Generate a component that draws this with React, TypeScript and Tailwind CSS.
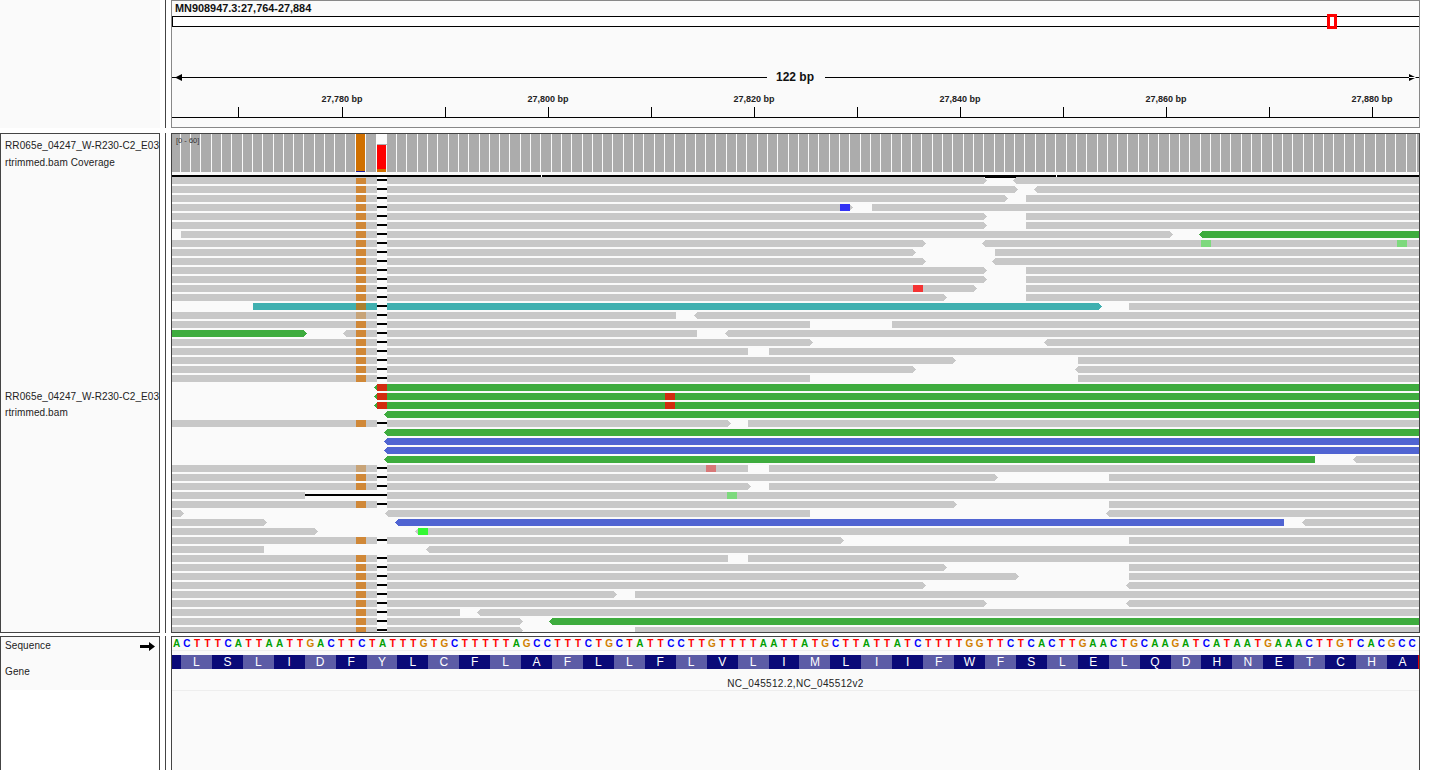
type Seg = { s: number; e: number; dir?: 'l' | 'r'; fill?: string };
type Mark = { s: number; fill: string };

const GRAY = '#c8c8c8';
const GREEN = '#3eac3e';
const BLUE = '#5064d2';
const TEAL = '#40b0b0';
const END = 1419;

const gr = (s: number, e: number, dir?: 'l' | 'r', fill?: string): Seg => ({ s, e, dir, fill });

const ROWS: Seg[][] = [
  [gr(172, 987, 'r'), gr(1013, END, 'l')],
  [gr(172, 1018, 'r'), gr(1034, END, 'l')],
  [gr(172, 1008, 'r'), gr(1026, END)],
  [gr(172, 853, 'r'), gr(872, END)],
  [gr(172, 987, 'r'), gr(1026, END)],
  [gr(172, 987, 'r'), gr(1026, END)],
  [gr(181, 1173, 'r'), gr(1199, END, 'l', GREEN)],
  [gr(172, 926, 'r'), gr(982, END, 'l')],
  [gr(172, 916, 'r'), gr(995, END)],
  [gr(172, 926, 'r'), gr(992, END, 'l')],
  [gr(172, 987, 'r'), gr(1026, END)],
  [gr(172, 987, 'r'), gr(1026, END)],
  [gr(172, 977, 'r'), gr(1026, END)],
  [gr(172, 947, 'r'), gr(1026, END)],
  [gr(253, 1102, 'r', TEAL), gr(1129, END)],
  [gr(172, 676), gr(694, END, 'l')],
  [gr(172, 810), gr(892, END)],
  [gr(172, 307, 'r', GREEN), gr(343, 697, 'l'), gr(725, END, 'l')],
  [gr(172, 813, 'r'), gr(1044, END, 'l')],
  [gr(172, 748), gr(769, END)],
  [gr(172, 956, 'r'), gr(1078, END)],
  [gr(172, 916, 'r'), gr(1075, END, 'l')],
  [gr(172, 810), gr(1078, END)],
  [gr(374, END, 'l', GREEN)],
  [gr(374, END, 'l', GREEN)],
  [gr(374, END, 'l', GREEN)],
  [gr(384, END, 'l', GREEN)],
  [gr(172, 731, 'r'), gr(748, END)],
  [gr(384, END, 'l', GREEN)],
  [gr(384, END, 'l', BLUE)],
  [gr(384, END, 'l', BLUE)],
  [gr(384, 1315, 'l', GREEN), gr(1353, END, 'l')],
  [gr(172, 748), gr(769, END)],
  [gr(172, 998, 'r'), gr(1109, END)],
  [gr(172, 751, 'r'), gr(769, END)],
  [gr(172, 305), gr(387, END)],
  [gr(172, 957, 'r'), gr(1109, END)],
  [gr(172, 184, 'r'), gr(385, 810, 'l'), gr(1106, END, 'l')],
  [gr(172, 267, 'r'), gr(395, 1284, 'l', BLUE), gr(1302, END, 'l')],
  [gr(172, 318, 'r'), gr(415, END, 'l')],
  [gr(172, 844, 'r'), gr(1129, END)],
  [gr(172, 264), gr(426, END, 'l')],
  [gr(172, 728), gr(748, END)],
  [gr(172, 947, 'r'), gr(1129, END)],
  [gr(172, 1019, 'r'), gr(1129, END)],
  [gr(172, 926, 'r'), gr(1126, END, 'l')],
  [gr(172, 617, 'r'), gr(635, END)],
  [gr(172, 987, 'r'), gr(1126, END, 'l')],
  [gr(172, 460), gr(477, END, 'l')],
  [gr(172, 523, 'r'), gr(549, END, 'l', GREEN)],
  [gr(172, 523, 'r'), gr(635, END)],
];

// rows without the C>A call and the deletion at 27,783
const NO_SITE = new Set([23, 24, 25, 26, 28, 29, 30, 31, 35, 37, 38, 39, 41]);

const MISMATCHES: Record<number, Mark[]> = {
  3: [{ s: 840, fill: '#3333f5' }],
  7: [
    { s: 1201, fill: '#7dd97d' },
    { s: 1397, fill: '#7dd97d' },
  ],
  12: [{ s: 913, fill: '#f43333' }],
  23: [{ s: 377, fill: '#d22c10' }],
  24: [
    { s: 377, fill: '#d22c10' },
    { s: 665, fill: '#d22c10' },
  ],
  25: [
    { s: 377, fill: '#d22c10' },
    { s: 665, fill: '#d22c10' },
  ],
  32: [{ s: 706, fill: '#d87878' }],
  35: [{ s: 727, fill: '#7dd97d' }],
  39: [{ s: 418, fill: '#33f833' }],
};

const SEQUENCE =
  'ACTTTCATTAATTGACTTCTATTTGTGCTTTTTAGCCTTTCTGCTATTCCTTGTTTTAATTATGCTTATTATCTTTTGGTTCTCACTTGAACTGCAAGATCATAATGAAACTTGTCACGCC';
const AMINO = 'LSLIDFYLCFLAFLLFLVLIMLIIFWFSLELQDHNETCHA';

const BASE_COLORS: Record<string, string> = {
  A: 'text-[#00a000]',
  C: 'text-[#0000ff]',
  G: 'text-[#d18000]',
  T: 'text-[#ff0000]',
};

function readPoints({ s, e, dir }: Seg, y: number) {
  const h = 7;
  const mid = y + h / 2;
  if (dir === 'r') return `${s},${y} ${e - 3},${y} ${e + 0.2},${mid} ${e - 3},${y + h} ${s},${y + h}`;
  if (dir === 'l') return `${s},${mid} ${s + 3},${y} ${e},${y} ${e},${y + h} ${s + 3},${y + h}`;
  return `${s},${y} ${e},${y} ${e},${y + h} ${s},${y + h}`;
}

function Coverage() {
  const lines = Array.from({ length: 121 }, (_, k) => Math.floor(180.3 + 10.3 * k)).filter((x) => x < END);
  return (
    <div className="relative h-[43px]">
      <svg width={1247} height={43} viewBox="172 134 1247 43" shapeRendering="crispEdges" className="block">
        <rect x={172} y={134} width={1247} height={38} fill="#acacac" />
        {lines.map((x) => (
          <rect key={x} x={x} y={134} width={1} height={38} fill="#fafafa" />
        ))}
        <rect x={356} y={134} width={9} height={38} fill="#d07000" />
        <rect x={356} y={171} width={9} height={1} fill="#1a1a9a" />
        <rect x={376} y={134} width={11} height={38} fill="#fafafa" />
        <rect x={377} y={144} width={10} height={1} fill="#acacac" />
        <rect x={377} y={145} width={9} height={24} fill="#ff0000" />
        <rect x={377} y={169} width={9} height={3} fill="#d07000" />
        <rect x={172} y={175} width={1247} height={2} fill="#000000" />
        <rect x={541} y={175} width={1} height={2} fill="#ffffff" />
        <rect x={1056} y={175} width={1} height={2} fill="#ffffff" />
      </svg>
      <span className="absolute left-[4px] top-[2px] text-[7.5px] leading-[10px] text-[#333]">[0 - 60]</span>
    </div>
  );
}

function Pileup() {
  return (
    <svg width={1247} height={455} viewBox="172 177 1247 455" shapeRendering="crispEdges" className="block">
      {ROWS.map((segs, i) => {
        const y = 177 + 9 * i + (i === 0 ? 1 : 0);
        const top = 177 + 9 * i;
        const hasSite = !NO_SITE.has(i);
        const tan = i === 15 || i === 32;
        return (
          <g key={i}>
            {segs.map((seg) => (
              <polygon key={seg.s} points={readPoints(seg, top)} fill={seg.fill ?? GRAY} />
            ))}
            {hasSite && (
              <>
                <rect x={377} y={top} width={10} height={7} fill="#fafafa" />
                <rect x={377} y={top + 2} width={10} height={2} fill="#000000" />
                <rect
                  x={356}
                  y={y}
                  width={10}
                  height={i === 0 ? 6 : 7}
                  fill={i === 14 ? '#ab8030' : tan ? '#c8a478' : '#d08838'}
                />
              </>
            )}
            {(MISMATCHES[i] ?? []).map((m) => (
              <rect key={m.s} x={m.s} y={top} width={10} height={7} fill={m.fill} />
            ))}
            {i === 35 && <rect x={305} y={top + 2} width={82} height={2} fill="#000000" />}
          </g>
        );
      })}
      <rect x={985} y={177} width={31} height={1} fill="#000000" />
    </svg>
  );
}

function SpanArrow({ side }: { side: 'l' | 'r' }) {
  return (
    <svg width={11} height={9} viewBox="0 0 11 9" className="block shrink-0">
      {side === 'l' ? <path d="M0 4h11V5H0ZM3 4.5L10 1V8Z" fill="#000" /> : <path d="M0 4h11V5H0ZM8 4.5L1 1V8Z" fill="#000" />}
    </svg>
  );
}

function Ruler() {
  return (
    <>
      <div className="mt-[46px] flex h-[9px] items-center">
        <SpanArrow side="l" />
        <div className="h-px flex-1 bg-black" />
        <span className="w-[58px] pr-px text-center text-[12px] leading-[9px] font-bold text-[#111]">122 bp</span>
        <div className="h-px flex-1 bg-black" />
        <SpanArrow side="r" />
      </div>
      <div className="mt-[11px] flex h-[12px] pl-[67px]">
        {['27,780', '27,800', '27,820', '27,840', '27,860', '27,880'].map((label) => (
          <div key={label} className="w-[206px] shrink-0 text-center text-[9px] leading-[12px] font-bold text-[#222]">
            {label} bp
          </div>
        ))}
      </div>
      <div className="mt-[2px] flex h-[11px] border-b border-black pl-[66px]">
        {Array.from({ length: 12 }, (_, i) => (
          <div key={i} className={`h-[10px] shrink-0 border-l border-black ${i === 0 ? 'w-[104px]' : 'w-[103px]'}`} />
        ))}
      </div>
    </>
  );
}

function Gutter() {
  return <div className="mx-[5px] w-px shrink-0 bg-[#444]" />;
}

export default function App() {
  return (
    <div className="flex h-[770px] w-[1437px] flex-col overflow-hidden bg-white font-['Liberation_Sans',Arial,sans-serif] text-black">
      {/* header with locus and ruler */}
      <div className="flex h-[128px] shrink-0">
        <div className="w-[160px] shrink-0 bg-[#fafafa]" />
        <Gutter />
        <div className="w-[1249px] shrink-0 border border-[#888] bg-[#fafafa]">
          <div className="h-[15px] pl-[3px] text-[10.9px] leading-[14px] font-bold text-[#111]">MN908947.3:27,764-27,884</div>
          <div className="relative h-[11px] border-y border-l border-black bg-white">
            <div className="absolute top-[-3px] left-[1154px] h-[15px] w-[10px] border-[3px] border-[#ff0000] bg-white" />
          </div>
          <Ruler />
        </div>
      </div>

      {/* alignment tracks */}
      <div className="mt-[5px] flex h-[500px] shrink-0">
        <div className="w-[160px] shrink-0 overflow-hidden border border-[#444] bg-[#fafafa] pt-[5px] pl-[4px] text-[10px] leading-[14px] tracking-[0.1px] whitespace-nowrap text-[#222]">
          <div>RR065e_04247_W-R230-C2_E03</div>
          <div className="mt-[3px]">rtrimmed.bam Coverage</div>
          <div className="mt-[220px]">RR065e_04247_W-R230-C2_E03</div>
          <div className="mt-[2px]">rtrimmed.bam</div>
        </div>
        <Gutter />
        <div className="w-[1249px] shrink-0 overflow-hidden border border-[#444] bg-[#fafafa]">
          <Coverage />
          <Pileup />
        </div>
      </div>

      {/* sequence and gene */}
      <div className="mt-[3px] flex min-h-0 flex-1">
        <div className="w-[160px] shrink-0 border-x border-t border-[#444] bg-white text-[10px] leading-[14px] tracking-[0.1px] text-[#222]">
          <div className="h-[53px] bg-[#fafafa] pt-[2px] pl-[4px]">
            <div className="flex items-center justify-between pr-[4px]">
              <span>Sequence</span>
              <svg width={15} height={9} viewBox="0 0 15 9" className="block">
                <path d="M0 3h9V0l6 4.5L9 9V6H0Z" fill="#000" />
              </svg>
            </div>
            <div className="mt-[12px]">Gene</div>
          </div>
        </div>
        <Gutter />
        <div className="w-[1249px] shrink-0 overflow-hidden border-x border-t border-[#444] bg-[#fafafa]">
          <div className="ml-[-0.6px] flex h-[14px] items-center border-b border-[#eeeeee] pt-px">
            {SEQUENCE.split('').map((base, i) => (
              <span key={i} className={`w-[10.3px] shrink-0 text-center text-[10px] leading-[12px] font-bold ${BASE_COLORS[base]}`}>
                {base}
              </span>
            ))}
          </div>
          <div className="mt-[4px] flex h-[14px]">
            <div className="w-[9px] shrink-0 bg-[#0a0a78]" />
            {AMINO.split('').map((aa, i) => (
              <div
                key={i}
                className={`w-[30.925px] shrink-0 text-center text-[12px] leading-[14px] text-white ${i % 2 === 0 ? 'bg-[#5c5ca6]' : 'bg-[#0a0a78]'}`}
              >
                {aa}
              </div>
            ))}
            <div className="w-px shrink-0 bg-[#e00000]" />
          </div>
          <div className="h-[22px] border-b border-[#eeeeee] pt-[9px] text-center text-[10px] leading-[12px] tracking-[0.35px] text-[#222]">
            NC_045512.2,NC_045512v2
          </div>
        </div>
      </div>
    </div>
  );
}
